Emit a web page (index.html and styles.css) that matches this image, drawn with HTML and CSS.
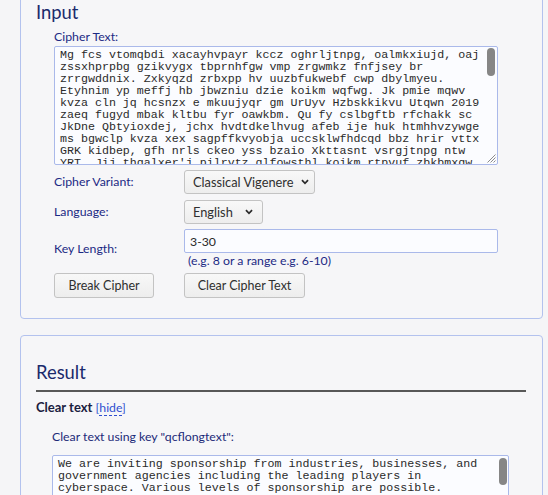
FILE: index.html
```html
<!DOCTYPE html>
<html lang="en">
<head>
<meta charset="utf-8">
<title>Vigenere Breaker</title>
<link rel="stylesheet" href="styles.css">
</head>
<body>
<div class="page">
  <section class="box box-input">
    <h2 class="box-title">Input</h2>
    <div class="form">
      <label class="label label-top" for="ct">Cipher Text:</label>
      <div class="area-wrap">
        <textarea id="ct" class="mono area area-cipher" spellcheck="false">Mg fcs vtomqbdi xacayhvpayr kccz oghrljtnpg, oalmkxiujd, oaj
zssxhprpbg gzikvygx tbprnhfgw vmp zrgwmkz fnfjsey br
zrrgwddnix. Zxkyqzd zrbxpp hv uuzbfukwebf cwp dbylmyeu.
Etyhnim yp meffj hb jbwzniu dzie koikm wqfwg. Jk pmie mqwv
kvza cln jq hcsnzx e mkuujyqr gm UrUyv Hzbskkikvu Utqwn 2019
zaeq fugyd mbak kltbu fyr oawkbm. Qu fy cslbgftb rfchakk sc
JkDne Qbtyioxdej, jchx hvdtdkelhvug afeb ije huk htmhhvzywge
ms bgwclp kvza xex sagpffkvyobja uccsklwfhdcqd bbz hrir vttx
GRK kidbep, gfh nrls ckeo yss bzaio Xkttasnt vsrgjtnpg ntw
YRT, Jij thgalxer'j pilrvtz glfowsthl koikm rtpvuf zbkbmxgw
ovd qhxkfcxb zeb kwpbtpn xc tyysrzpxz. Gkx pmie rhbmsdj wcv
vgxzqm pqwe ezs bzkwjcxs qnmlzv, hoq jdsfzcvqa oyqbz gfhnr
ceib kvza tbprn. Lrd wxqfmb pzaoe xvtb kehsc yzvrth gloiex
mlivqg hr jsbfwqt ye nrlzhc Tbvvgqkh aqwr xfbtsmwyk bdw
dqzr lxoyh mbak jjtwxerc. Fu hqzs ckvqupdx bdpkxrq ja
vytxgez pu kdnrwmgb yxx zelqvqk, dfu gwhr jcpo oaxq hvzbx
Wqknzovf lyyajfz ewb xjrs qkvl xgmncaqgo reyxvrk. Nis
iefvbhr tgowzb zyq dcswuuyiefkw ibl pbrqgkqmk ohm aotzr
Wxlnq kptxwahsq tibyk pz dsslrj azhb lvyppmgqk jzeb cvfq
hwx uikvb rmp zkqwy yzhdcy qhr fwobtuvm pbxs ejzy ywxfj
vhqmzl pebx tgcrwh, xvpq qkcnzfxb tpwh gfhnr nzax ckvqu
Hzbskkikvu Utqwn zaeq xhxezj lvyofhq qsb jyvm ybrpbg.
Glhcr pmie dlpwq hb zrrgw oaxq sybnt hu xgklf sdw kvza
fugyd xsl mkuuj bdpkx fyr uccsk. Mg fcs vtomqbdi cwp
vsrgjtnpg ekzrbw, nxqt bbz ijevp tbprn qkv hcsnzx.
kvza xex zrgwmkz hvdtdkelhvug, ms bgwclp oawkbm rfchakk
ije cslbgftb dzie koikm. Qu fy qhxkfcxb ntw pilrvtz.
gzikvygx zelqvqk jcpo ckeo yss bzaio Xkttasnt lrd mqwv
Etyhnim afeb huk wqfwg mbak. Jk nrls oalmkxiujd oaj
zssxhprpbg glfowsthl zbkbmxgw rtpvuf, thgalxer'j kidbep.</textarea>
        <span class="thumb" aria-hidden="true"></span>
        <svg class="grip" viewBox="0 0 10 10" width="10" height="10" aria-hidden="true"><path d="M9.5 1.5 L1.5 9.5 M9.5 4.5 L4.5 9.5 M9.5 7.5 L7.5 9.5" stroke="#8c8c8c" stroke-width="1" fill="none"/></svg>
      </div>
      <div class="row row-variant">
        <label class="label row-label" for="variant">Cipher Variant:</label>
        <span class="select-wrap">
          <select id="variant" class="select select-variant">
            <option>Classical Vigenere</option>
          </select>
          <svg class="chevron chevron-variant" viewBox="0 0 10 7" width="8" height="6" aria-hidden="true"><path d="M1.2 1.3 L5 5.1 L8.8 1.3" fill="none" stroke="#2b2b2b" stroke-width="2.2"/></svg>
        </span>
      </div>
      <div class="row row-lang">
        <label class="label row-label" for="lang">Language:</label>
        <span class="select-wrap">
          <select id="lang" class="select select-lang">
            <option>English</option>
          </select>
          <svg class="chevron chevron-lang" viewBox="0 0 10 7" width="8" height="6" aria-hidden="true"><path d="M1.2 1.3 L5 5.1 L8.8 1.3" fill="none" stroke="#2b2b2b" stroke-width="2.2"/></svg>
        </span>
      </div>
      <div class="row row-key">
        <label class="label row-label" for="keylen">Key Length:</label>
        <div class="key-col">
          <input id="keylen" class="text-input" type="text" value="3-30">
          <div class="hint">(e.g. 8 or a range e.g. 6-10)</div>
        </div>
      </div>
      <div class="row row-buttons">
        <div class="btn-col"><button class="btn btn-break" type="button">Break Cipher</button></div>
        <button class="btn btn-clear" type="button">Clear Cipher Text</button>
      </div>
    </div>
  </section>

  <section class="box box-result">
    <h2 class="box-title">Result</h2>
    <hr class="rule">
    <div class="clear-head"><strong class="clear-title">Clear text</strong> <a class="toggle" href="#">[<span class="toggle-word">hide</span>]</a></div>
    <div class="key-note">Clear text using key "qcflongtext":</div>
    <div class="area-wrap area-wrap-clear">
      <textarea class="mono area area-clear" spellcheck="false">We are inviting sponsorship from industries, businesses, and
government agencies including the leading players in
cyberspace. Various levels of sponsorship are possible.
Contact us if your company or organization would like to
support the event. Sponsors will be acknowledged on our
web site, in the printed program and during the sessions
of the conference. Please send your offer to the chair of
the organizing committee before the end of the month.
We look forward to hearing from you and to welcoming you
at the conference. More details about the sponsorship
packages, the exhibition area and the social events are
available from the secretariat of the conference.
Thank you for your interest and your support.</textarea>
      <span class="thumb thumb-clear" aria-hidden="true"></span>
    </div>
  </section>
</div>
</body>
</html>
```

FILE: styles.css
```css
html {
  overflow: hidden;
  background: #f5f5f7;
}

body {
  margin: 0;
  font-family: Lato, "Open Sans", sans-serif;
  font-size: 12.3px;
  color: #1d2a78;
}

.page {
  margin: -16px 5px 0 20px;
  display: flex;
  flex-direction: column;
  gap: 16px;
}

.box {
  border: 1px solid #b3c2ee;
  border-radius: 4px;
  background: #f6f6f8;
}

.box-input {
  padding: 14px 15px 20px 15px;
}

.box-result {
  padding: 23px 16px 0 15px;
}

.box-title {
  margin: 0;
  font-size: 18.4px;
  font-weight: 400;
  line-height: 26px;
  color: #1b2a6c;
}

.form {
  margin-left: 18px;
  display: flex;
  flex-direction: column;
}

.label {
  line-height: 16px;
  color: #1c2a84;
}

.label-top {
  margin-top: 4px;
  margin-bottom: 1px;
}

.mono {
  font-family: "Liberation Mono", "DejaVu Sans Mono", monospace;
  font-size: 11.65px;
  line-height: 12px;
  color: #2a2a2a;
}

.area-wrap {
  position: relative;
  align-self: flex-start;
}

.area-wrap-clear {
  margin-left: 16px;
  margin-top: 10px;
  width: 457px;
}

.area {
  display: block;
  box-sizing: border-box;
  margin: 0;
  padding: 2px 16px 2px 5px;
  border: 1px solid #aab9ea;
  border-radius: 2px;
  background: #fbfcff;
  resize: none;
  overflow: hidden;
}

.area-cipher {
  width: 444px;
  height: 119px;
}

.area-clear {
  width: 457px;
  height: 119px;
}

.thumb {
  position: absolute;
  top: 2px;
  right: 3px;
  width: 8px;
  height: 28px;
  border-radius: 4px;
  background: #868686;
}

.thumb-clear {
  top: 3px;
  right: 2px;
  height: 27px;
}

.grip {
  position: absolute;
  right: 2px;
  bottom: 2px;
}

.row {
  display: flex;
  align-items: center;
}

.row-variant {
  margin-top: 5px;
}

.row-lang {
  margin-top: 6px;
}

.row-label {
  width: 130px;
  flex: none;
}

.select-wrap {
  position: relative;
  display: inline-flex;
}

.select {
  appearance: none;
  -webkit-appearance: none;
  margin: 0;
  height: 24px;
  box-sizing: border-box;
  border: 1px solid #c3c3c3;
  border-radius: 3px;
  background: linear-gradient(#f8f8f8, #ededed);
  font-family: Lato, "Open Sans", sans-serif;
  font-size: 12.8px;
  color: #2f2f2f;
  padding: 0 12px 0 8px;
}

.select-variant {
  width: 131px;
}

.select-lang {
  width: 79px;
}

.chevron {
  position: absolute;
  top: 9px;
  pointer-events: none;
}

.chevron-variant {
  right: 6px;
}

.chevron-lang {
  right: 10px;
}

.row-key {
  margin-top: 5px;
}

.key-col {
  display: flex;
  flex-direction: column;
}

.text-input {
  box-sizing: border-box;
  width: 314px;
  height: 24px;
  margin: 0;
  padding: 0 5px;
  border: 1px solid #aab9ea;
  border-radius: 2px;
  background: #fbfcff;
  font-family: Lato, "Open Sans", sans-serif;
  font-size: 12.3px;
  color: #2a2a2a;
}

.hint {
  margin-left: 4px;
  line-height: 16px;
  color: #1c2a84;
}

.row-buttons {
  margin-top: 4px;
}

.btn-col {
  width: 130px;
  flex: none;
}

.btn {
  box-sizing: border-box;
  height: 25px;
  margin: 0;
  padding: 0;
  border: 1px solid #c3c3c3;
  border-radius: 3px;
  background: linear-gradient(#f8f8f8, #ededed);
  font-family: Lato, "Open Sans", sans-serif;
  font-size: 12.5px;
  color: #2f2f2f;
  white-space: nowrap;
}

.btn-break {
  width: 100px;
}

.btn-clear {
  width: 121px;
}

.rule {
  margin: 5px 0 0 0;
  border: none;
  height: 2px;
  background: #585858;
}

.clear-head {
  margin-top: 7px;
  line-height: 16px;
}

.clear-title {
  font-size: 13px;
  font-weight: 700;
  color: #1a2040;
}

.toggle {
  color: #2f4fd0;
  text-decoration: none;
}

.toggle-word {
  border-bottom: 1px dashed #2f4fd0;
}

.key-note {
  margin-top: 13px;
  margin-left: 16px;
  line-height: 16px;
  color: #1c2a78;
}
```
